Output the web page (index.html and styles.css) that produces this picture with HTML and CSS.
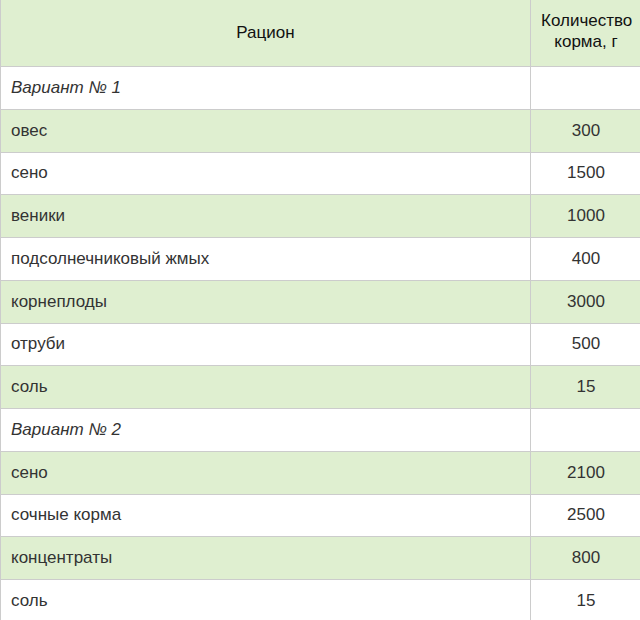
FILE: index.html
```html
<!DOCTYPE html>
<html lang="ru">
<head>
<meta charset="utf-8">
<link rel="stylesheet" href="styles.css">
</head>
<body>
<table class="ration">
  <thead>
    <tr>
      <th class="col-name">Рацион</th>
      <th class="col-qty">Количество<br>корма, г</th>
    </tr>
  </thead>
  <tbody>
    <tr class="variant"><td><em>Вариант № 1</em></td><td></td></tr>
    <tr class="alt"><td>овес</td><td class="num">300</td></tr>
    <tr><td>сено</td><td class="num">1500</td></tr>
    <tr class="alt"><td>веники</td><td class="num">1000</td></tr>
    <tr><td>подсолнечниковый жмых</td><td class="num">400</td></tr>
    <tr class="alt"><td>корнеплоды</td><td class="num">3000</td></tr>
    <tr><td>отруби</td><td class="num">500</td></tr>
    <tr class="alt"><td>соль</td><td class="num">15</td></tr>
    <tr class="variant"><td><em>Вариант № 2</em></td><td></td></tr>
    <tr class="alt"><td>сено</td><td class="num">2100</td></tr>
    <tr><td>сочные корма</td><td class="num">2500</td></tr>
    <tr class="alt"><td>концентраты</td><td class="num">800</td></tr>
    <tr><td>соль</td><td class="num">15</td></tr>
  </tbody>
</table>
</body>
</html>
```

FILE: styles.css
```css
html, body {
  margin: 0;
  padding: 0;
  background: #ffffff;
}

body {
  font-family: "Liberation Sans", Arial, sans-serif;
  font-size: 17px;
  color: #333333;
}

.ration {
  border-collapse: collapse;
  width: 641px;
  table-layout: fixed;
}

.ration th,
.ration td {
  border: 1px solid #cccccc;
}

.ration thead th {
  border-top: none;
  background: #dfefd0;
  color: #111111;
  font-weight: normal;
  line-height: 21.5px;
  text-align: center;
  vertical-align: middle;
}

.col-name {
  width: 509px;
  padding: 0 10px;
}

.col-qty {
  width: 90px;
  padding: 9.5px 10px 13.5px;
}

.ration td {
  line-height: 20px;
  padding: 10.875px 10px;
  text-align: left;
  vertical-align: middle;
}

.ration td.num {
  text-align: center;
}

.ration tr.alt td {
  background: #dfefd0;
}

.ration em {
  font-style: italic;
}
```
